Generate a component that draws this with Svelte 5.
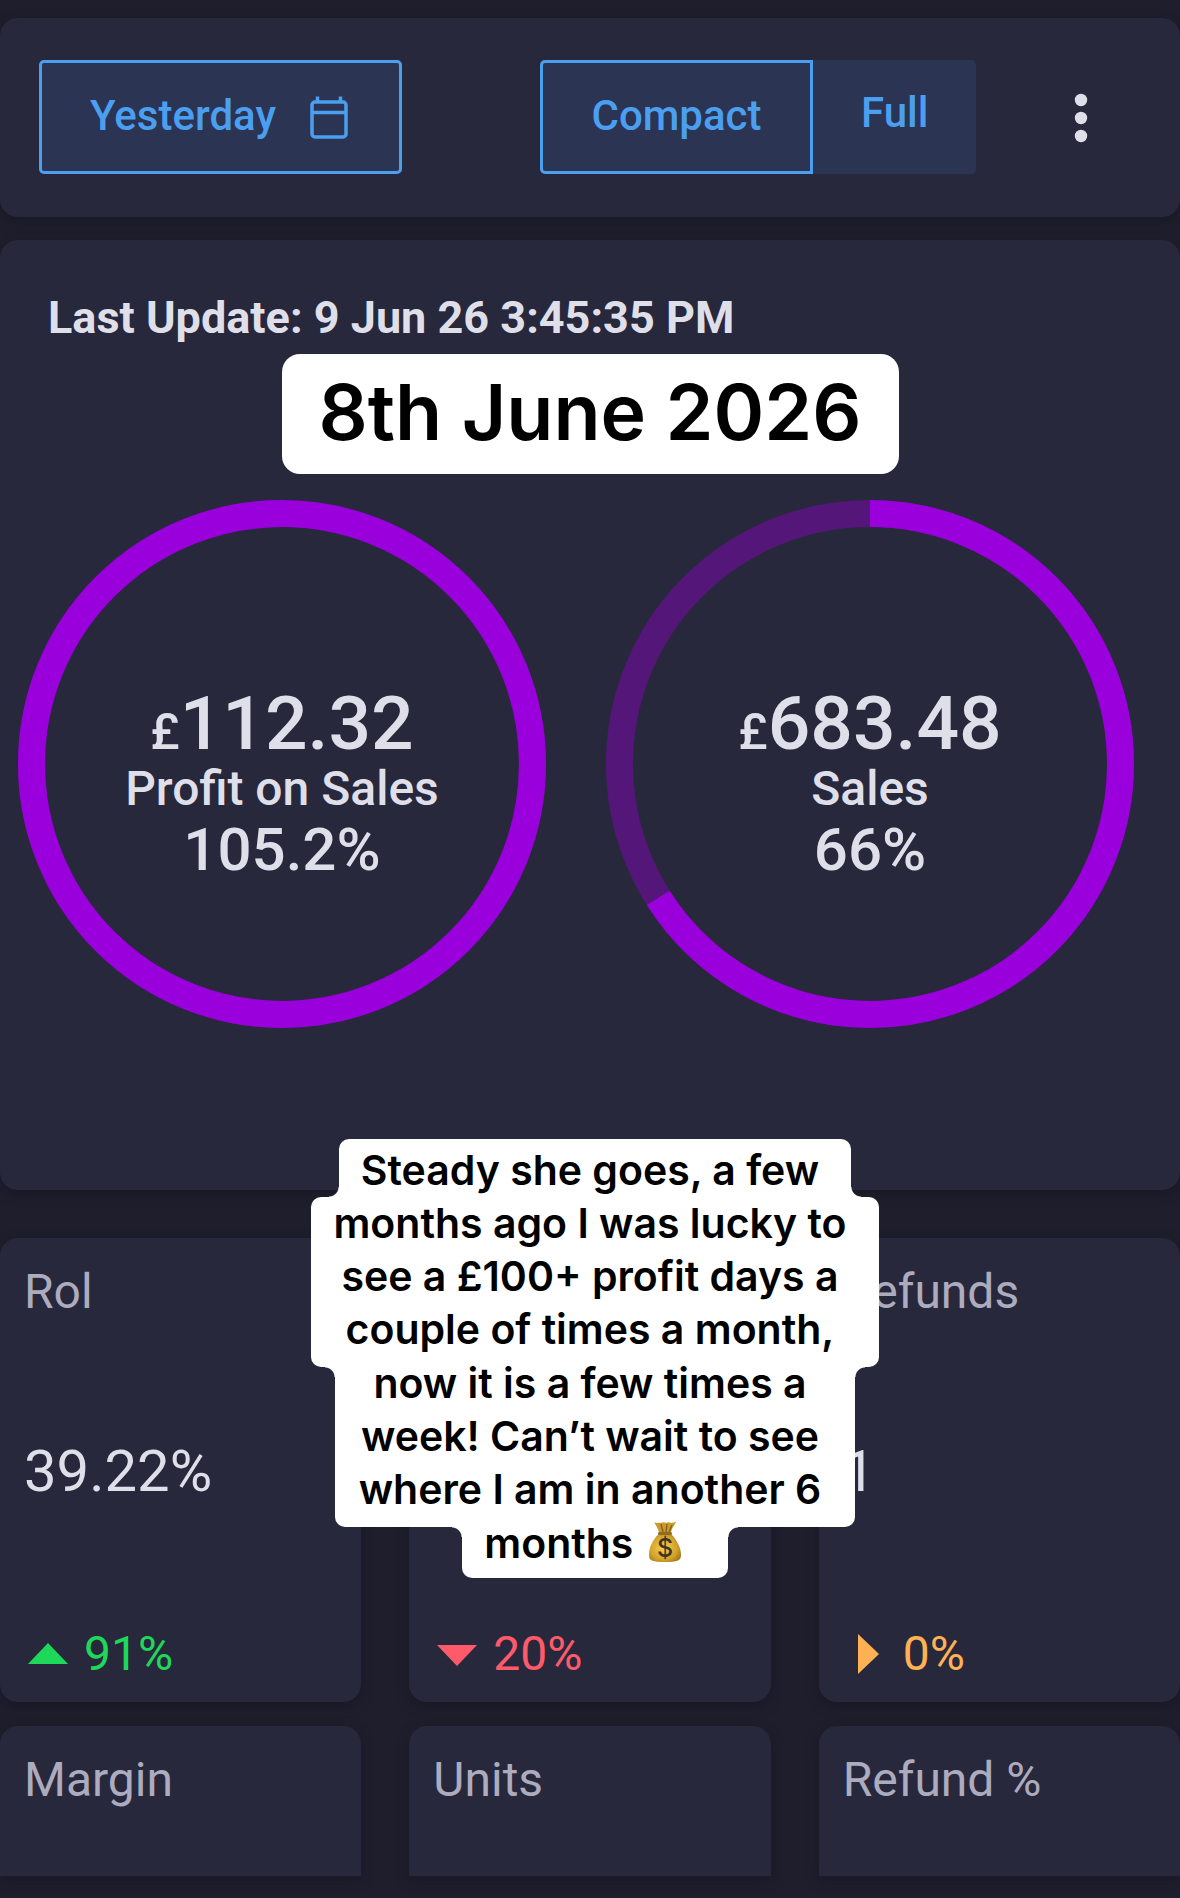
<script>
  let view = $state("compact");

  const rings = [
    { amount: "112.32", label: "Profit on Sales", percent: 105.2 },
    { amount: "683.48", label: "Sales", percent: 66 },
  ];

  const stats = [
    { label: "Rol", value: "39.22%", change: "91%", trend: "up" },
    { label: "", value: "", change: "20%", trend: "down" },
    { label: "Refunds", value: "1", change: "0%", trend: "flat" },
  ];

  const nextStats = ["Margin", "Units", "Refund %"];

  const arrows = {
    up: "M4 36 L24 15 L44 36 Z",
    down: "M4 17 L44 17 L24 38 Z",
    flat: "M15 6 L36 26 L15 46 Z",
  };

  // ring geometry, in viewBox units
  const radius = 250.5;
  const around = 2 * Math.PI * radius;

  function dash(percent) {
    const part = Math.min(percent, 100) / 100;
    return `${around * part} ${around}`;
  }
</script>

<main>
  <header class="panel toolbar">
    <button class="btn outlined date-btn">
      <span>Yesterday</span>
      <svg class="calendar" viewBox="0 0 38 44" aria-hidden="true">
        <rect x="2" y="6" width="34" height="35" rx="3" />
        <path d="M2 16.5 H36 M7.5 0.5 V7 M30.5 0.5 V7" />
      </svg>
    </button>

    <div class="switch">
      <button class="btn left" class:outlined={view === "compact"} onclick={() => (view = "compact")}>Compact</button>
      <button class="btn right" class:outlined={view === "full"} onclick={() => (view = "full")}>Full</button>
    </div>

    <div class="more">
      <button class="dots" aria-label="More">
        <svg viewBox="0 0 14 50">
          <circle cx="7" cy="7" r="6.2" />
          <circle cx="7" cy="25" r="6.2" />
          <circle cx="7" cy="43" r="6.2" />
        </svg>
      </button>
    </div>
  </header>

  <section class="panel summary">
    <h2>Last Update: 9 Jun 26 3:45:35 PM</h2>
    <div class="rings">
      {#each rings as ring}
        <div class="ring">
          <svg viewBox="0 0 528 528" aria-hidden="true">
            <circle class="track" cx="264" cy="264" r={radius} />
            <circle class="fill" cx="264" cy="264" r={radius} stroke-dasharray={dash(ring.percent)} transform="rotate(-90 264 264)" />
          </svg>
          <div class="ring-text">
            <div class="amount"><span>£</span>{ring.amount}</div>
            <div class="name">{ring.label}</div>
            <div class="percent">{ring.percent}%</div>
          </div>
        </div>
      {/each}
    </div>
  </section>

  <section class="grid">
    {#each stats as stat}
      <div class="panel stat">
        <div class="label">{stat.label}</div>
        <div class="value">{stat.value}</div>
        <div class="change {stat.trend}">
          <svg viewBox="0 0 48 52" aria-hidden="true"><path d={arrows[stat.trend]} /></svg>
          <span>{stat.change}</span>
        </div>
      </div>
    {/each}
  </section>

  <section class="grid next">
    {#each nextStats as label}
      <div class="panel stat cut">
        <div class="label">{label}</div>
      </div>
    {/each}
  </section>

  <div class="caption title">
    <p>8th June 2026</p>
  </div>

  <div class="caption note">
    <p class="flare-bottom">Steady she goes, a few</p>
    <p>months ago I was lucky to<br />see a £100+ profit days a<br />couple of times a month,</p>
    <p class="flare-top">now it is a few times a<br />week! Can’t wait to see<br />where I am in another 6</p>
    <p class="flare-top last">
      months
      <svg class="bag" viewBox="0 0 34 42" aria-label="money bag">
        <defs>
          <radialGradient id="gold" cx="45%" cy="50%" r="60%">
            <stop offset="0" stop-color="#f5d04c" />
            <stop offset="0.7" stop-color="#d3a32c" />
            <stop offset="1" stop-color="#a87a1c" />
          </radialGradient>
        </defs>
        <path fill="url(#gold)" d="M11 13 C4 19 1 27 1 34 C1 40 5 41 17 41 C29 41 33 40 33 34 C33 27 29 19 23 13 Z" />
        <path fill="#c99a2c" d="M6 1 C9 3 11 1 13 2 C16 0 18 3 21 1 C23 3 25 1 28 1 C26 5 23 8 23 13 H11 C11 8 8 5 6 1 Z" />
        <path fill="none" stroke="#8a6116" stroke-width="1.4" d="M13 3 L15 11 M19 3 L18 11 M24 4 L21 11" />
        <rect x="10" y="11" width="14" height="3" rx="1.5" fill="#8f6a20" />
        <text x="17" y="36" text-anchor="middle">$</text>
      </svg>
    </p>
  </div>
</main>

<style>
  :global(body) {
    margin: 0;
    background: #1f1e2c;
  }

  main {
    position: relative;
    padding: 18px 0 21px;
    overflow: hidden;
    font-family: Roboto, "Liberation Sans", sans-serif;
    color: #dfdfea;
  }

  .panel {
    background: #28283d;
    border-radius: 18px;
    box-shadow: 0 4px 12px rgba(20, 18, 32, 0.5);
  }

  .toolbar {
    display: flex;
    align-items: center;
    padding: 42px 0 43px 39px;
    margin-bottom: 23px;
  }

  .btn {
    height: 114px;
    box-sizing: border-box;
    border: 0;
    padding: 0 48px 10px;
    background: #2b3452;
    color: #4b9ff0;
    font-family: inherit;
    font-size: 42px;
    font-weight: 500;
    cursor: pointer;
  }

  .outlined {
    border: 3px solid #4b9ff0;
    padding-bottom: 4px;
  }

  .date-btn {
    display: flex;
    align-items: center;
    justify-content: space-between;
    width: 363px;
    padding-right: 51px;
    margin-right: 138px;
    border-radius: 5px;
  }

  .calendar {
    width: 38px;
    height: 44px;
    margin-top: 5px;
    fill: none;
    stroke: #4b9ff0;
    stroke-width: 3.5;
  }

  .switch {
    display: flex;
  }

  .left {
    width: 273px;
    border-radius: 5px 0 0 5px;
  }

  .right {
    width: 163px;
    border-radius: 0 5px 5px 0;
  }

  .more {
    flex: 1;
    display: flex;
    justify-content: center;
    padding: 2px 0 0 6px;
  }

  .dots {
    padding: 12px 24px;
    border: 0;
    background: none;
    cursor: pointer;
  }

  .dots svg {
    display: block;
    width: 14px;
    height: 50px;
    fill: #dfdfea;
  }

  .summary {
    padding: 48px 0 162px;
    margin-bottom: 48px;
  }

  h2 {
    margin: 0 48px 152px;
    font-size: 45px;
    line-height: 60px;
    font-weight: 700;
  }

  .rings {
    display: grid;
    grid-template-columns: 1fr 1fr;
    gap: 60px;
    padding: 0 46px 0 18px;
  }

  .ring {
    display: grid;
    place-items: center;
  }

  .ring svg,
  .ring-text {
    grid-area: 1 / 1;
  }

  .ring svg {
    display: block;
    width: 100%;
  }

  .ring circle {
    fill: none;
    stroke-width: 27;
  }

  .track {
    stroke: #55167a;
  }

  .fill {
    stroke: #9900dc;
  }

  .ring-text {
    text-align: center;
    font-weight: 500;
    padding-top: 48px;
  }

  .amount {
    font-size: 75px;
    line-height: 66px;
  }

  .amount span {
    font-size: 50px;
  }

  .name {
    font-size: 48px;
    line-height: 48px;
  }

  .percent {
    font-size: 60px;
    line-height: 74px;
  }

  .grid {
    display: grid;
    grid-template-columns: repeat(3, 1fr);
    gap: 48px;
  }

  .next {
    margin-top: 24px;
  }

  .stat {
    display: flex;
    flex-direction: column;
    justify-content: space-between;
    box-sizing: border-box;
    height: 464px;
    padding: 24px 24px 18px;
  }

  .cut {
    height: 150px;
    border-radius: 18px 18px 0 0;
  }

  .label {
    height: 60px;
    font-size: 48px;
    line-height: 60px;
    color: #adacbe;
  }

  .value {
    height: 60px;
    font-size: 58px;
    line-height: 56px;
  }

  .change {
    display: flex;
    align-items: center;
    gap: 12px;
    font-size: 48px;
    line-height: 60px;
  }

  .change svg {
    width: 48px;
    height: 52px;
    fill: currentColor;
  }

  .up {
    color: #1ed85a;
  }

  .down {
    color: #ff5a6a;
  }

  .flat {
    color: #ffb154;
  }

  .caption {
    position: absolute;
    left: 0;
    right: 0;
    display: flex;
    flex-direction: column;
    align-items: center;
    color: #000;
    font-family: Inter, "Liberation Sans", sans-serif;
    text-align: center;
    white-space: nowrap;
  }

  .caption p {
    position: relative;
    margin: 0;
    background: #fff;
  }

  .title {
    top: 354px;
  }

  .title p {
    padding: 0 37px 4px;
    border-radius: 18px;
    font-size: 77px;
    line-height: 116px;
    font-weight: 600;
  }

  .note {
    top: 1139px;
    padding-left: 10px;
    font-size: 41px;
    line-height: 53px;
    font-weight: 600;
  }

  .note p {
    padding: 0 32px 11px 22px;
    border-radius: 10px;
  }

  .note .flare-bottom {
    padding-top: 5px;
    padding-bottom: 0;
    border-radius: 10px 10px 0 0;
  }

  .note .flare-top {
    margin-top: -10px;
    padding-left: 24px;
    padding-right: 34px;
    border-radius: 0 0 10px 10px;
  }

  .note .last {
    padding-left: 22px;
    padding-right: 46px;
    padding-bottom: 8px;
  }

  /* concave corners where one block meets a wider one */
  .flare-bottom::before,
  .flare-bottom::after,
  .flare-top::before,
  .flare-top::after {
    content: "";
    position: absolute;
    width: 10px;
    height: 10px;
  }

  .flare-bottom::before {
    right: 100%;
    bottom: 0;
    background: radial-gradient(circle at 0 0, transparent 9px, #fff 10px);
  }

  .flare-bottom::after {
    left: 100%;
    bottom: 0;
    background: radial-gradient(circle at 100% 0, transparent 9px, #fff 10px);
  }

  .flare-top::before {
    right: 100%;
    top: 10px;
    background: radial-gradient(circle at 0 100%, transparent 9px, #fff 10px);
  }

  .flare-top::after {
    left: 100%;
    top: 10px;
    background: radial-gradient(circle at 100% 100%, transparent 9px, #fff 10px);
  }

  .bag {
    width: 34px;
    height: 42px;
    margin-left: 4px;
    vertical-align: -5px;
  }

  .bag text {
    font-family: Inter, sans-serif;
    font-size: 25px;
    font-weight: 500;
    fill: #3f3322;
  }
</style>
